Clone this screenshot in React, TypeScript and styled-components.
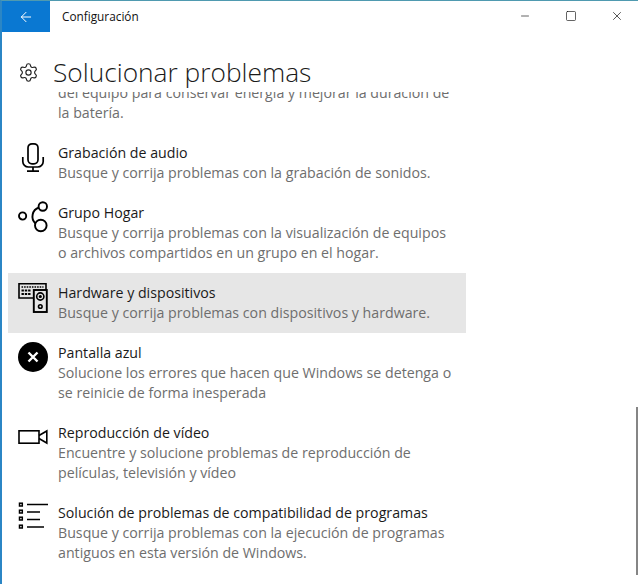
import React from 'react'
import styled, { createGlobalStyle } from 'styled-components'
import { ArrowLeft, Minus, Square, X, Settings } from 'lucide-react'

const GlobalStyle = createGlobalStyle`
  html, body {
    margin: 0;
    padding: 0;
    background: #fff;
  }
  body {
    font-family: 'Open Sans', 'Noto Sans', sans-serif;
  }
`

const Window = styled.div`
  position: relative;
  width: 638px;
  height: 584px;
  box-sizing: border-box;
  overflow: hidden;
  background: #fff;
  border-top: 1px solid #4f9ab0;
  border-left: 2px solid #2b86c5;
  display: flex;
  flex-direction: column;
`

const TitleBar = styled.div`
  height: 31px;
  flex: none;
  display: flex;
  align-items: center;
  margin-right: -2px;
`

const BackButton = styled.div`
  width: 48px;
  height: 31px;
  background: #0a78d2;
  color: #fff;
  display: flex;
  align-items: center;
  justify-content: center;
`

const AppName = styled.div`
  margin-left: 12px;
  padding-bottom: 2px;
  font-size: 11.8px;
  color: #111;
  flex: 1;
`

const WindowButton = styled.div`
  width: 46px;
  height: 29px;
  padding-bottom: 2px;
  color: #111;
  display: flex;
  align-items: center;
  justify-content: center;
`

const Heading = styled.div`
  flex: none;
  height: 40px;
  padding: 20px 0 0 16px;
  display: flex;
  align-items: center;
  gap: 14px;
`

const HeadingText = styled.h1`
  margin: 0;
  font-size: 26.3px;
  font-weight: 300;
  color: #1a1a1a;
`

const List = styled.div`
  flex: 1;
  overflow: hidden;
  width: 464px;
  box-sizing: border-box;
  padding-left: 6px;
`

const Item = styled.div<{ $active?: boolean; $first?: boolean }>`
  display: flex;
  gap: 10px;
  padding: 10px 10px;
  margin-top: ${({ $first }) => ($first ? '-19px' : '0')};
  background: ${({ $active }) => ($active ? '#e6e6e6' : 'transparent')};
`

const IconBox = styled.div`
  width: 30px;
  height: 34px;
  margin-top: -3px;
  flex: none;
`

const Body = styled.div`
  flex: 1;
  min-width: 0;
  white-space: nowrap;
`

const ItemTitle = styled.div`
  font-size: 14.2px;
  line-height: 20px;
  color: #1a1a1a;
`

const ItemText = styled.div`
  font-size: 14.2px;
  line-height: 20px;
  color: #6e6e6e;
`

const Scrollbar = styled.div`
  position: absolute;
  right: 0;
  top: 406px;
  bottom: 9px;
  width: 2px;
  background: #858585;
`

const MicIcon = () => (
  <svg width="30" height="34" viewBox="0 0 30 34" fill="none" stroke="#000" strokeWidth="1.7">
    <rect x="10" y="3.8" width="10" height="20" rx="4" />
    <path d="M4.8 17v4.5a5.5 5.5 0 0 0 5.5 5.5h9.4a5.5 5.5 0 0 0 5.5-5.5V17" />
    <path d="M15 27v4M9 31.2h12" />
  </svg>
)

const GroupIcon = () => (
  <svg width="30" height="34" viewBox="0 0 30 34" fill="none" stroke="#000" strokeWidth="1.9">
    <circle cx="4.6" cy="16" r="3.6" />
    <circle cx="24.8" cy="6.5" r="4.2" />
    <circle cx="22.8" cy="25.5" r="5.8" />
    <path d="M21 7.5A9.5 9.5 0 0 0 17.5 23.5" />
  </svg>
)

const HardwareIcon = () => (
  <svg width="30" height="34" viewBox="0 0 30 34" fill="none" stroke="#000" strokeWidth="1.6">
    <path d="M15 18H1V3.8h27V10" />
    <path d="M3.5 7h22" strokeDasharray="1.6 1" strokeWidth="1.4" />
    <path d="M3.5 10.5h9M3.5 14h9" strokeDasharray="2.4 0.9" strokeWidth="1.8" />
    <rect x="15.8" y="10" width="13" height="22" fill="#e6e6e6" strokeWidth="1.9" />
    <circle cx="22.3" cy="16.5" r="3.6" />
    <circle cx="22.3" cy="16.5" r="0.8" fill="#000" />
    <circle cx="22.3" cy="26.5" r="1.8" />
  </svg>
)

const ErrorIcon = () => (
  <svg width="30" height="34" viewBox="0 0 30 34">
    <circle cx="15" cy="17" r="15" fill="#000" />
    <path d="M10.5 12.5l9 9M19.5 12.5l-9 9" stroke="#fff" strokeWidth="2.4" />
  </svg>
)

const VideoIcon = () => (
  <svg width="30" height="34" viewBox="0 0 30 34" fill="none" stroke="#000" strokeWidth="1.6">
    <rect x="1" y="10.8" width="20" height="12.4" />
    <path d="M21 15.5l7.8-4.5v12L21 18.5" />
  </svg>
)

const ChecklistIcon = () => (
  <svg width="30" height="34" viewBox="0 0 30 34" fill="none" stroke="#000" strokeWidth="1.5">
    <rect x="1.5" y="3.2" width="2.8" height="2.8" />
    <rect x="1.5" y="10.2" width="2.8" height="2.8" />
    <rect x="1.5" y="17.2" width="2.8" height="2.8" />
    <rect x="1.5" y="25.2" width="2.8" height="2.8" />
    <path d="M9 4.5h21M9 12h13M9 19.5h13M9 27h17" />
  </svg>
)

type Entry = {
  title?: string
  lines: string[]
  icon?: React.ReactNode
  active?: boolean
}

const entries: Entry[] = [
  {
    lines: ['del equipo para conservar energía y mejorar la duración de', 'la batería.'],
  },
  {
    title: 'Grabación de audio',
    lines: ['Busque y corrija problemas con la grabación de sonidos.'],
    icon: <MicIcon />,
  },
  {
    title: 'Grupo Hogar',
    lines: [
      'Busque y corrija problemas con la visualización de equipos',
      'o archivos compartidos en un grupo en el hogar.',
    ],
    icon: <GroupIcon />,
  },
  {
    title: 'Hardware y dispositivos',
    lines: ['Busque y corrija problemas con dispositivos y hardware.'],
    icon: <HardwareIcon />,
    active: true,
  },
  {
    title: 'Pantalla azul',
    lines: [
      'Solucione los errores que hacen que Windows se detenga o',
      'se reinicie de forma inesperada',
    ],
    icon: <ErrorIcon />,
  },
  {
    title: 'Reproducción de vídeo',
    lines: ['Encuentre y solucione problemas de reproducción de', 'películas, televisión y vídeo'],
    icon: <VideoIcon />,
  },
  {
    title: 'Solución de problemas de compatibilidad de programas',
    lines: [
      'Busque y corrija problemas con la ejecución de programas',
      'antiguos en esta versión de Windows.',
    ],
    icon: <ChecklistIcon />,
  },
]

const App = (): React.ReactElement => (
  <>
    <GlobalStyle />
    <Window>
      <TitleBar>
        <BackButton>
          <ArrowLeft size={16} strokeWidth={1.5} />
        </BackButton>
        <AppName>Configuración</AppName>
        <WindowButton>
          <Minus size={12} strokeWidth={1.3} />
        </WindowButton>
        <WindowButton>
          <Square size={12} strokeWidth={1.3} />
        </WindowButton>
        <WindowButton>
          <X size={14} strokeWidth={1.2} />
        </WindowButton>
      </TitleBar>
      <Heading>
        <Settings size={21} strokeWidth={1.3} color="#222" />
        <HeadingText>Solucionar problemas</HeadingText>
      </Heading>
      <List>
        {entries.map((entry, i) => (
          <Item key={i} $active={entry.active} $first={i === 0}>
            <IconBox>{entry.icon}</IconBox>
            <Body>
              {entry.title && <ItemTitle>{entry.title}</ItemTitle>}
              {entry.lines.map((line) => (
                <ItemText key={line}>{line}</ItemText>
              ))}
            </Body>
          </Item>
        ))}
      </List>
      <Scrollbar />
    </Window>
  </>
)

export default App
